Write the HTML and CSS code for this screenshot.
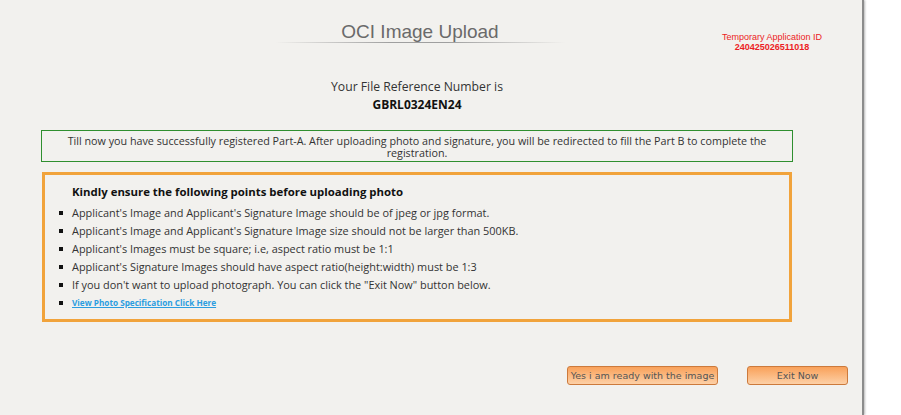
FILE: index.html
```html
<!DOCTYPE html>
<html lang="en">

<head>
    <meta charset="UTF-8">
    <title>OCI Image Upload</title>
    <link rel="stylesheet" href="styles.css">
</head>

<body>
    <div class="page">
        <div class="header">
            <div class="headerleft"></div>
            <div class="headertitle">
                <h2>OCI Image Upload</h2>
            </div>
            <div class="tempid">
                <span class="tempidlabel">Temporary Application ID</span>
                <span class="tempidnumber">240425026511018</span>
            </div>
        </div>

        <div class="content">
            <div class="refblock">
                <p class="reflabel">Your File Reference Number is</p>
                <p class="refnumber">GBRL0324EN24</p>
            </div>

            <div class="greenbox">
                Till now you have successfully registered Part-A. After uploading photo and signature, you will be redirected to fill the Part B to complete the registration.
            </div>

            <div class="orangebox">
                <h4>Kindly ensure the following points before uploading photo</h4>
                <ul class="points">
                    <li>Applicant's Image and Applicant's Signature Image should be of jpeg or jpg format.</li>
                    <li>Applicant's Image and Applicant's Signature Image size should not be larger than 500KB.</li>
                    <li>Applicant's Images must be square; i.e, aspect ratio must be 1:1</li>
                    <li>Applicant's Signature Images should have aspect ratio(height:width) must be 1:3</li>
                    <li>If you don't want to upload photograph. You can click the "Exit Now" button below.</li>
                    <li><a href="#" class="speclink">View Photo Specification Click Here</a></li>
                </ul>
            </div>
        </div>

        <div class="buttonrow">
            <button class="btn btnready">Yes i am ready with the image</button>
            <button class="btn btnexit">Exit Now</button>
        </div>
    </div>
</body>

</html>
```

FILE: styles.css
```css
* {
    margin: 0;
    padding: 0;
    box-sizing: border-box;
}

body {
    width: 100vw;
    height: 100vh;
    background-color: #ffffff;
    overflow: hidden;
}

.page {
    width: 864px;
    height: 415px;
    background-color: #f2f1ee;
    border-right: 2px solid #8c8c8c;
    box-shadow: 1px 0px 2px #b8b8b8;
    font-family: "Open Sans", "Noto Sans", sans-serif;
    color: #333333;
}

/* header */
.header {
    display: grid;
    grid-template-columns: 275px 290px 1fr;
    padding-top: 19px;
    height: 58px;
}

.headertitle {
    height: 24px;
    background: linear-gradient(to right, rgba(160, 160, 160, 0), #9f9f9f 40%, #9f9f9f 60%, rgba(160, 160, 160, 0)) bottom / 100% 1px no-repeat;
}

.headertitle h2 {
    font-family: "Liberation Sans", Arial, sans-serif;
    font-weight: normal;
    font-size: 19px;
    line-height: 22px;
    padding-top: 2px;
    color: #6a6a6a;
    text-align: center;
}

.tempid {
    display: flex;
    flex-direction: column;
    align-items: center;
    width: 104px;
    margin-left: 155px;
    padding-top: 13px;
    font-family: "Liberation Sans", Arial, sans-serif;
    font-size: 9px;
    line-height: 10px;
    color: #ec1c24;
}

.tempidnumber {
    font-weight: bold;
}

/* content */
.content {
    width: 752px;
    margin-left: 41px;
}

.refblock {
    text-align: center;
    padding-top: 20px;
}

.reflabel {
    font-size: 12.2px;
    line-height: 18px;
}

.refnumber {
    font-size: 12px;
    font-weight: bold;
    line-height: 18px;
    color: #111111;
}

.greenbox {
    margin-top: 16px;
    height: 32px;
    border: 1.5px solid #2f8f2f;
    text-align: center;
    font-size: 10.75px;
    line-height: 12px;
    padding-top: 4px;
    padding-left: 8px;
    padding-right: 8px;
}

.orangebox {
    margin-top: 10px;
    margin-left: 1px;
    width: 750px;
    height: 150px;
    border: 3px solid #f1a33b;
    padding: 9px 0px 0px 14px;
}

.orangebox h4 {
    font-size: 11.4px;
    line-height: 16px;
    color: #111111;
    padding-left: 13px;
    margin-bottom: 4px;
}

.points {
    list-style: none;
}

.points li {
    display: flex;
    align-items: center;
    font-size: 10.9px;
    line-height: 18px;
}

.points li::before {
    content: "";
    width: 4px;
    height: 4px;
    background-color: #111111;
    margin-right: 9px;
}

.speclink {
    font-size: 8.2px;
    font-weight: bold;
    color: #2b9de0;
}

/* buttons */
.buttonrow {
    display: flex;
    justify-content: flex-end;
    gap: 29px;
    margin-top: 44px;
    padding-right: 14px;
}

.btn {
    height: 19px;
    border: 1px solid #cc7a3c;
    border-radius: 3px;
    background: linear-gradient(#f9a15a, #fdd0a6);
    font-family: "DejaVu Sans", Verdana, sans-serif;
    font-size: 9.5px;
    color: #555555;
}

.btnready {
    width: 151px;
}

.btnexit {
    width: 101px;
}
```
